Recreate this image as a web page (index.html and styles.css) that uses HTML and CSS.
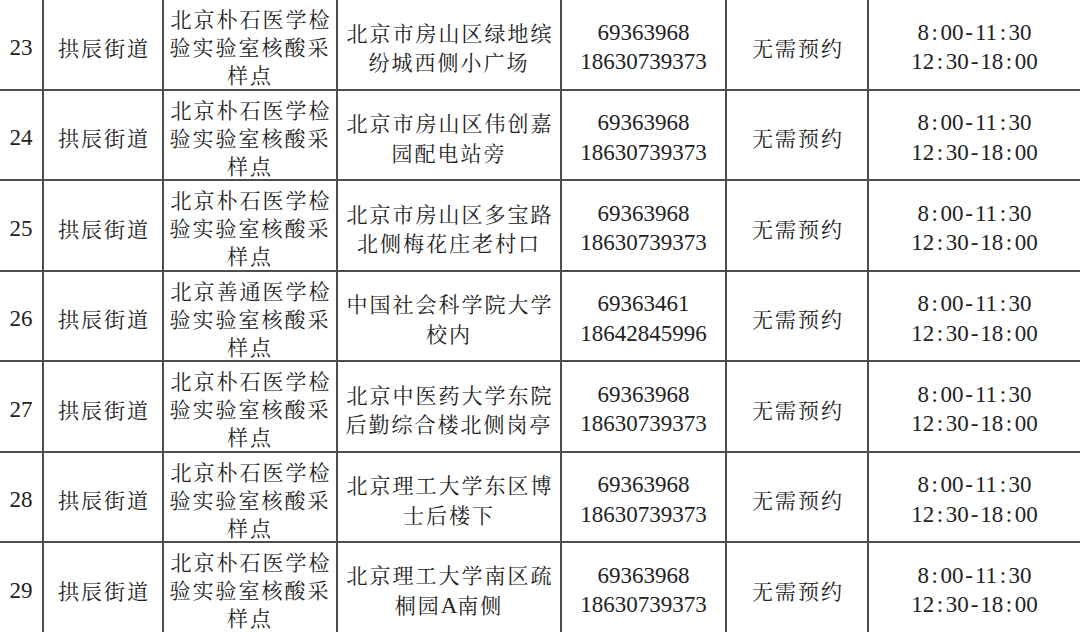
FILE: index.html
```html
<!DOCTYPE html>
<html lang="zh-CN">
<head>
<meta charset="utf-8">
<title>核酸采样点</title>
<link rel="stylesheet" href="styles.css">
</head>
<body>
<table class="sites">
  <colgroup>
    <col class="c-no"><col class="c-street"><col class="c-org"><col class="c-addr"><col class="c-tel"><col class="c-book"><col class="c-time">
  </colgroup>
  <tbody>
    <tr>
      <td class="num">23</td>
      <td class="cjk">拱辰街道</td>
      <td class="cjk org">北京朴石医学检<br>验实验室核酸采<br>样点</td>
      <td class="cjk">北京市房山区绿地缤<br>纷城西侧小广场</td>
      <td class="num">69363968<br>18630739373</td>
      <td class="cjk">无需预约</td>
      <td class="num">8<span class="p">:</span>00<span class="p">-</span>11<span class="p">:</span>30<br>12<span class="p">:</span>30<span class="p">-</span>18<span class="p">:</span>00</td>
    </tr>
    <tr>
      <td class="num">24</td>
      <td class="cjk">拱辰街道</td>
      <td class="cjk org">北京朴石医学检<br>验实验室核酸采<br>样点</td>
      <td class="cjk">北京市房山区伟创嘉<br>园配电站旁</td>
      <td class="num">69363968<br>18630739373</td>
      <td class="cjk">无需预约</td>
      <td class="num">8<span class="p">:</span>00<span class="p">-</span>11<span class="p">:</span>30<br>12<span class="p">:</span>30<span class="p">-</span>18<span class="p">:</span>00</td>
    </tr>
    <tr>
      <td class="num">25</td>
      <td class="cjk">拱辰街道</td>
      <td class="cjk org">北京朴石医学检<br>验实验室核酸采<br>样点</td>
      <td class="cjk">北京市房山区多宝路<br>北侧梅花庄老村口</td>
      <td class="num">69363968<br>18630739373</td>
      <td class="cjk">无需预约</td>
      <td class="num">8<span class="p">:</span>00<span class="p">-</span>11<span class="p">:</span>30<br>12<span class="p">:</span>30<span class="p">-</span>18<span class="p">:</span>00</td>
    </tr>
    <tr>
      <td class="num">26</td>
      <td class="cjk">拱辰街道</td>
      <td class="cjk org">北京善通医学检<br>验实验室核酸采<br>样点</td>
      <td class="cjk">中国社会科学院大学<br>校内</td>
      <td class="num">69363461<br>18642845996</td>
      <td class="cjk">无需预约</td>
      <td class="num">8<span class="p">:</span>00<span class="p">-</span>11<span class="p">:</span>30<br>12<span class="p">:</span>30<span class="p">-</span>18<span class="p">:</span>00</td>
    </tr>
    <tr>
      <td class="num">27</td>
      <td class="cjk">拱辰街道</td>
      <td class="cjk org">北京朴石医学检<br>验实验室核酸采<br>样点</td>
      <td class="cjk">北京中医药大学东院<br>后勤综合楼北侧岗亭</td>
      <td class="num">69363968<br>18630739373</td>
      <td class="cjk">无需预约</td>
      <td class="num">8<span class="p">:</span>00<span class="p">-</span>11<span class="p">:</span>30<br>12<span class="p">:</span>30<span class="p">-</span>18<span class="p">:</span>00</td>
    </tr>
    <tr>
      <td class="num">28</td>
      <td class="cjk">拱辰街道</td>
      <td class="cjk org">北京朴石医学检<br>验实验室核酸采<br>样点</td>
      <td class="cjk">北京理工大学东区博<br>士后楼下</td>
      <td class="num">69363968<br>18630739373</td>
      <td class="cjk">无需预约</td>
      <td class="num">8<span class="p">:</span>00<span class="p">-</span>11<span class="p">:</span>30<br>12<span class="p">:</span>30<span class="p">-</span>18<span class="p">:</span>00</td>
    </tr>
    <tr>
      <td class="num">29</td>
      <td class="cjk">拱辰街道</td>
      <td class="cjk org">北京朴石医学检<br>验实验室核酸采<br>样点</td>
      <td class="cjk">北京理工大学南区疏<br>桐园<span class="lat">A</span>南侧</td>
      <td class="num">69363968<br>18630739373</td>
      <td class="cjk">无需预约</td>
      <td class="num">8<span class="p">:</span>00<span class="p">-</span>11<span class="p">:</span>30<br>12<span class="p">:</span>30<span class="p">-</span>18<span class="p">:</span>00</td>
    </tr>
  </tbody>
</table>
</body>
</html>
```
FILE: styles.css
```css
html, body {
  margin: 0;
  padding: 0;
  background: #ffffff;
  overflow: hidden;
}

.sites {
  border-collapse: collapse;
  table-layout: fixed;
  width: 1082px;
  margin: -2px 0 0 -2px;
  color: #222222;
}

.c-no { width: 44px; }
.c-street { width: 120px; }
.c-org { width: 174px; }
.c-addr { width: 224px; }
.c-tel { width: 165px; }
.c-book { width: 142px; }
.c-time { width: 213px; }

.sites tr {
  height: 90.5px;
}

.sites td {
  border: 2px solid #4d4d4d;
  padding: 6px 0 0 0;
  text-align: center;
  vertical-align: middle;
  line-height: 29.5px;
  white-space: nowrap;
  overflow: hidden;
}

.cjk {
  font-family: "Noto Serif CJK SC", "Noto Serif SC", "Source Han Serif SC", serif;
  font-size: 21px;
  letter-spacing: 2px;
  text-indent: 2px;
}

.sites td.org {
  padding-top: 4px;
  line-height: 28px;
}

.num {
  font-family: "Liberation Serif", "Times New Roman", serif;
  font-size: 23px;
}

.num .p {
  display: inline-block;
  width: 11.5px;
  text-align: center;
}

.lat {
  font-family: "Liberation Serif", "Times New Roman", serif;
  font-size: 23px;
  letter-spacing: 0;
}
```
